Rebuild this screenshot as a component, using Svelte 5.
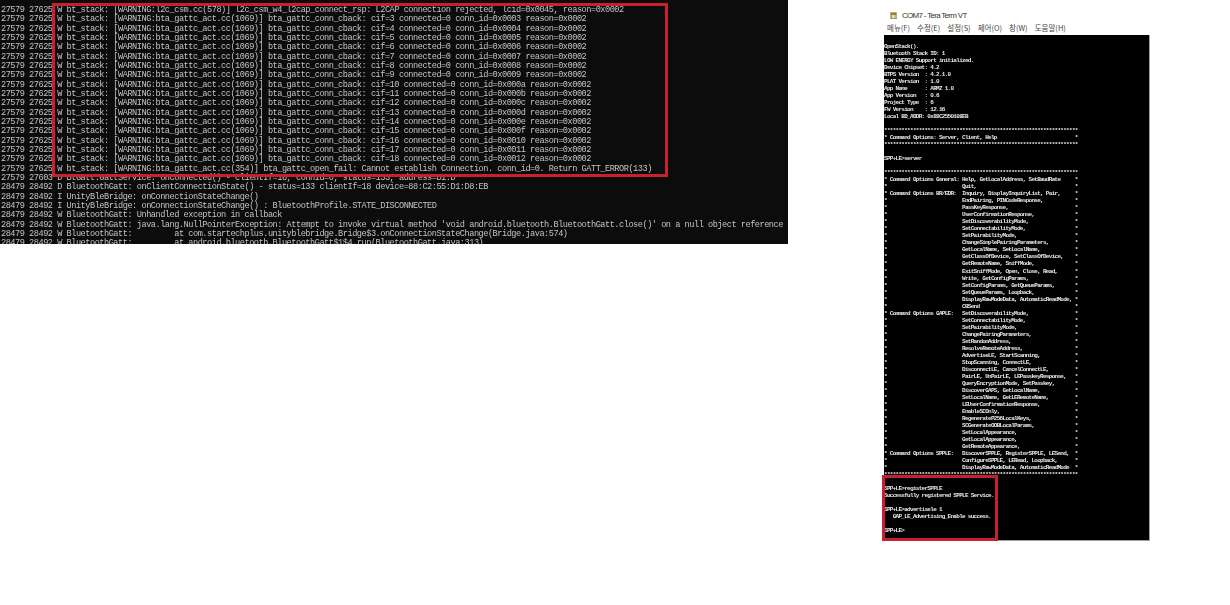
<script>
    // left log: android logcat dump
    const cifLines = [];
    for (let cif = 3; cif <= 18; cif++) {
        const id = cif.toString(16).padStart(4, '0');
        cifLines.push(`27579 27625 W bt_stack: [WARNING:bta_gattc_act.cc(1069)] bta_gattc_conn_cback: cif=${cif} connected=0 conn_id=0x${id} reason=0x0002`);
    }

    const logLines = [
        '27579 27625 W bt_stack: [WARNING:l2c_csm.cc(578)] l2c_csm_w4_l2cap_connect_rsp: L2CAP connection rejected, lcid=0x0045, reason=0x0002',
        ...cifLines,
        '27579 27625 W bt_stack: [WARNING:bta_gattc_act.cc(354)] bta_gattc_open_fail: Cannot establish Connection. conn_id=0. Return GATT_ERROR(133)',
        '27579 27603 D BtGatt.GattService: onConnected() - clientIf=18, connId=0, status=133, address=D1:D',
        '28479 28492 D BluetoothGatt: onClientConnectionState() - status=133 clientIf=18 device=88:C2:55:D1:D8:EB',
        '28479 28492 I UnityBleBridge: onConnectionStateChange()',
        '28479 28492 I UnityBleBridge: onConnectionStateChange() : BluetoothProfile.STATE_DISCONNECTED',
        '28479 28492 W BluetoothGatt: Unhandled exception in callback',
        "28479 28492 W BluetoothGatt: java.lang.NullPointerException: Attempt to invoke virtual method 'void android.bluetooth.BluetoothGatt.close()' on a null object reference",
        '28479 28492 W BluetoothGatt:         at com.startechplus.unityblebridge.Bridge$3.onConnectionStateChange(Bridge.java:574)',
        '28479 28492 W BluetoothGatt:         at android.bluetooth.BluetoothGatt$1$4.run(BluetoothGatt.java:313)'
    ];

    // right window: tera term console
    const stars = '*'.repeat(67);
    const row = (label, value = '') => ('* ' + label.padEnd(25) + value).padEnd(66) + '*';

    const groups = [
        ['Command Options General:', ['Help, GetLocalAddress, SetBaudRate', 'Quit,']],
        ['Command Options BR/EDR:', ['Inquiry, DisplayInquiryList, Pair,', 'EndPairing, PINCodeResponse,', 'PassKeyResponse,', 'UserConfirmationResponse,', 'SetDiscoverabilityMode,', 'SetConnectabilityMode,', 'SetPairabilityMode,', 'ChangeSimplePairingParameters,', 'GetLocalName, SetLocalName,', 'GetClassOfDevice, SetClassOfDevice,', 'GetRemoteName, SniffMode,', 'ExitSniffMode, Open, Close, Read,', 'Write, GetConfigParams,', 'SetConfigParams, GetQueueParams,', 'SetQueueParams, Loopback,', 'DisplayRawModeData, AutomaticReadMode,', 'CBSend']],
        ['Command Options GAPLE:', ['SetDiscoverabilityMode,', 'SetConnectabilityMode,', 'SetPairabilityMode,', 'ChangePairingParameters,', 'SetRandomAddress,', 'ResolveRemoteAddress,', 'AdvertiseLE, StartScanning,', 'StopScanning, ConnectLE,', 'DisconnectLE, CancelConnectLE,', 'PairLE, UnPairLE, LEPasskeyResponse,', 'QueryEncryptionMode, SetPasskey,', 'DiscoverGAPS, GetLocalName,', 'SetLocalName, GetLERemoteName,', 'LEUserConfirmationResponse,', 'EnableSCOnly,', 'RegenerateP256LocalKeys,', 'SCGenerateOOBLocalParams,', 'SetLocalAppearance,', 'GetLocalAppearance,', 'GetRemoteAppearance,']],
        ['Command Options SPPLE:', ['DiscoverSPPLE, RegisterSPPLE, LESend,', 'ConfigureSPPLE, LERead, Loopback,', 'DisplayRawModeData, AutomaticReadMode']]
    ];

    const termLines = [
        'OpenStack().',
        'Bluetooth Stack ID: 1',
        'LOW ENERGY Support initialized.',
        'Device Chipset: 4.2',
        'BTPS Version  : 4.2.1.0',
        'PLAT Version  : 1.0',
        'App Name      : ARMZ 1.0',
        'App Version   : 0.6',
        'Project Type  : 6',
        'FW Version    : 12.16',
        'Local BD_ADDR: 0x88C2550108EB',
        '',
        stars,
        row('Command Options: Server, Client, Help'),
        stars,
        '',
        'SPP+LE>server',
        '',
        stars,
        ...groups.flatMap(([label, values]) => values.map((v, i) => row(i ? '' : label, v))),
        stars,
        '',
        'SPP+LE>registerSPPLE',
        'Successfully registered SPPLE Service.',
        '',
        'SPP+LE>advertisele 1',
        '   GAP_LE_Advertising_Enable success.',
        '',
        'SPP+LE>'
    ];

    const menu = ['메뉴(F)', '수정(E)', '설정(S)', '제어(O)', '창(W)', '도움말(H)'];
</script>

<div class="page">
    <section class="log">
        <pre class="log-text">{logLines.join('\n')}</pre>
        <div class="mark mark-log"></div>
    </section>

    <section class="window">
        <div class="title">
            <svg class="icon" viewBox="0 0 7 7" width="7" height="7" aria-hidden="true">
                <rect width="7" height="7" fill="#c4ad6a" />
                <rect x="1" y="1" width="5" height="2" fill="#8f8448" />
                <rect x="2.5" y="3" width="2" height="3" fill="#f3ecc8" />
                <rect y="6" width="7" height="1" fill="#8c9a78" />
            </svg>
            <span>COM7 - Tera Term VT</span>
        </div>
        <nav class="menu">
            {#each menu as item}
                <span>{item}</span>
            {/each}
        </nav>
        <div class="term">
            <pre class="term-text">{termLines.join('\n')}</pre>
            <div class="mark mark-term"></div>
        </div>
    </section>
</div>

<style>
    :global(body) {
        margin: 0;
        background: #fff;
    }

    .page {
        display: flex;
        align-items: flex-start;
        height: 605px;
        overflow: hidden;
    }

    pre {
        margin: 0;
        font-family: "Liberation Mono", monospace;
    }

    .log {
        position: relative;
        flex: none;
        width: 788px;
        height: 244px;
        overflow: hidden;
        background: #0c0c0c;
    }

    .log-text {
        padding: 6px 0 0 1px;
        font-size: 8.6px;
        line-height: 9.33px;
        letter-spacing: -0.475px;
        color: #c4c4c4;
        filter: blur(0.25px);
    }

    .mark {
        position: absolute;
        box-sizing: border-box;
        border-style: solid;
        border-color: #c8202e;
    }

    .mark-log {
        left: 52px;
        top: 3px;
        width: 616px;
        height: 174px;
        border-width: 3px;
    }

    .window {
        flex: none;
        width: 266px;
        margin-left: 96px;
    }

    .title {
        display: flex;
        align-items: center;
        gap: 5px;
        height: 14px;
        margin-top: 8px;
        padding-left: 6px;
        font: 8px "Liberation Sans", sans-serif;
        letter-spacing: -0.7px;
        color: #333;
    }

    .menu {
        display: flex;
        gap: 7px;
        height: 13px;
        padding-left: 3px;
        font: 7.5px/12px "Noto Sans CJK KR", sans-serif;
        color: #444;
    }

    .term {
        position: relative;
        box-sizing: border-box;
        height: 506px;
        background: #000;
        border-right: 1px solid #a0a0a0;
        border-bottom: 1px solid #a0a0a0;
    }

    .term-text {
        padding-top: 8px;
        font-size: 6px;
        font-weight: bold;
        line-height: 7.02px;
        letter-spacing: -0.71px;
        color: #e8e8e8;
        filter: blur(0.2px);
    }

    .mark-term {
        left: -2px;
        top: 440px;
        width: 116px;
        height: 66px;
        border-width: 3px;
    }
</style>
